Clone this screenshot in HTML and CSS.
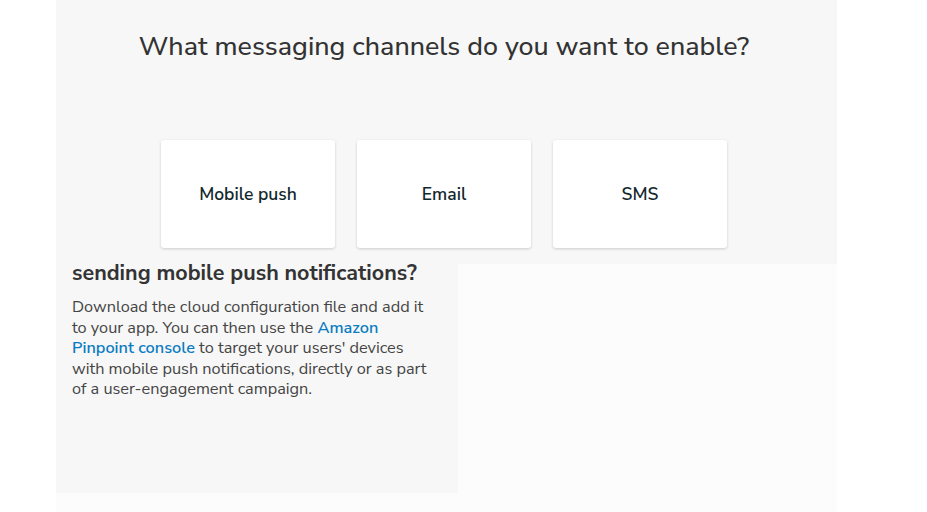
FILE: index.html
```html
<!DOCTYPE html>
<html lang="en">
<head>
<meta charset="utf-8">
<title>Messaging channels</title>
<link rel="stylesheet" href="styles.css">
</head>
<body>
<div class="page">
  <section class="hero">
    <h1 class="hero-title">What messaging channels do you want to enable?</h1>
    <div class="channels">
      <div class="channel">Mobile push</div>
      <div class="channel">Email</div>
      <div class="channel">SMS</div>
    </div>
  </section>
  <section class="detail">
    <div class="detail-main">
      <h2 class="detail-title">sending mobile push notifications?</h2>
      <p class="detail-text">Download the cloud configuration file and add it to your app. You can then use the <a class="link" href="#">Amazon Pinpoint console</a> to target your users' devices with mobile push notifications, directly or as part of a user-engagement campaign.</p>
    </div>
    <div class="detail-side"></div>
  </section>
</div>
</body>
</html>
```

FILE: styles.css
```css
html, body {
  margin: 0;
  padding: 0;
  background: #ffffff;
}

body {
  font-family: "Nunito Sans", "Open Sans", "Liberation Sans", sans-serif;
  height: 512px;
  overflow: hidden;
}

.page {
  width: 781px;
  margin-left: 56px;
}

.hero {
  background: #f7f7f7;
  height: 264px;
  box-sizing: border-box;
  padding: 27px 5px 0 0;
  display: flex;
  flex-direction: column;
  align-items: center;
}

.hero-title {
  margin: 0;
  font-size: 26.8px;
  line-height: 38px;
  font-weight: 500;
  color: #333333;
}

.channels {
  display: flex;
  gap: 22px;
  margin-top: 75px;
}

.channel {
  width: 174px;
  height: 108px;
  background: #ffffff;
  border-radius: 3px;
  box-shadow: 0 1px 3px rgba(0, 0, 0, 0.18);
  display: flex;
  align-items: center;
  justify-content: center;
  font-size: 17.5px;
  font-weight: 600;
  color: #12282d;
}

.detail {
  display: flex;
  background: #fcfcfc;
  height: 248px;
}

.detail-main {
  width: 402px;
  height: 229px;
  box-sizing: border-box;
  background: #f7f7f7;
  padding: 0 16px;
}

.detail-side {
  flex: 1;
}

.detail-title {
  margin: -2px 0 0;
  font-size: 21.5px;
  line-height: 22px;
  font-weight: 700;
  color: #333333;
}

.detail-text {
  width: 366px;
  margin: 13px 0 0;
  font-size: 16.3px;
  line-height: 20.5px;
  color: #444444;
}

.link {
  color: #0a7cc1;
  font-weight: 600;
  text-decoration: none;
}
```
